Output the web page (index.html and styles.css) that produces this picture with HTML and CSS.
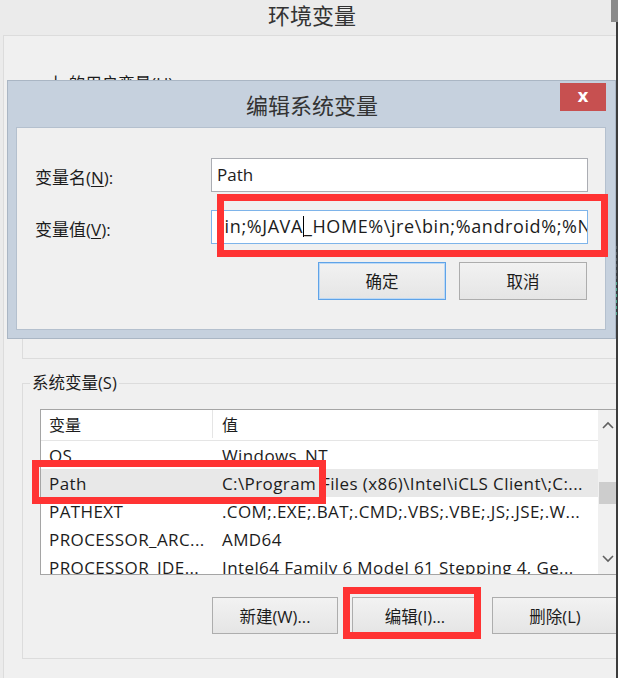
FILE: index.html
```html
<!DOCTYPE html>
<html lang="zh-CN">
<head>
  <meta charset="UTF-8" />
  <title>环境变量</title>
  <link rel="stylesheet" href="styles.css">
</head>
<body>
  <!-- Ventana de fondo: Variables de entorno -->
  <div class="env-window">
    <div class="env-title">环境变量</div>
    <div class="env-body">
      <div class="group-box user-box">
        <span class="group-label">上 的用户变量(U)</span>
      </div>
      <div class="group-box sys-box">
        <span class="group-label">系统变量(S)</span>
        <div class="listview">
          <div class="list-main">
            <div class="list-head">
              <span class="col-name">变量</span>
              <span class="col-val">值</span>
            </div>
            <div class="list-row"><span class="col-name">OS</span><span class="col-val">Windows_NT</span></div>
            <div class="list-row selected"><span class="col-name">Path</span><span class="col-val">C:\Program Files (x86)\Intel\iCLS Client\;C:...</span></div>
            <div class="list-row"><span class="col-name">PATHEXT</span><span class="col-val">.COM;.EXE;.BAT;.CMD;.VBS;.VBE;.JS;.JSE;.W...</span></div>
            <div class="list-row"><span class="col-name">PROCESSOR_ARC...</span><span class="col-val">AMD64</span></div>
            <div class="list-row"><span class="col-name">PROCESSOR_IDE...</span><span class="col-val">Intel64 Family 6 Model 61 Stepping 4, Ge...</span></div>
          </div>
          <div class="scrollbar">
            <span class="scroll-btn">
              <svg width="12" height="8" viewBox="0 0 12 8"><path d="M1 7 L6 2 L11 7" fill="none" stroke="#606060" stroke-width="1.6"/></svg>
            </span>
            <span class="scroll-track"><span class="scroll-thumb"></span></span>
            <span class="scroll-btn">
              <svg width="12" height="8" viewBox="0 0 12 8"><path d="M1 1 L6 6 L11 1" fill="none" stroke="#606060" stroke-width="1.6"/></svg>
            </span>
          </div>
        </div>
        <div class="btn-row">
          <button class="win-btn">新建(W)...</button>
          <button class="win-btn">编辑(I)...</button>
          <button class="win-btn">删除(L)</button>
        </div>
      </div>
    </div>
  </div>

  <!-- Borde de otra ventana a la derecha -->
  <div class="side-edge"></div>
  <div class="side-top"></div>
  <div class="side-meter">
    <span></span><span></span><span></span><span></span><span></span><span></span>
    <span class="on"></span><span class="on"></span><span class="on"></span><span class="on"></span><span class="on"></span><span class="on"></span>
  </div>

  <!-- Dialogo: Editar variable del sistema -->
  <div class="edit-dialog">
    <div class="dlg-titlebar">
      <span class="dlg-title">编辑系统变量</span>
      <span class="dlg-close">x</span>
    </div>
    <div class="dlg-panel">
      <div class="field-row">
        <span class="field-label">变量名(<u>N</u>):</span>
        <div class="field-input">Path</div>
      </div>
      <div class="field-row">
        <span class="field-label">变量值(<u>V</u>):</span>
        <div class="field-input focused">
          <div class="value-clip"><span class="scrolled">bin;%JAVA<span class="caret"></span>_HOME%\jre\bin;%android%;%NDK_HOME%</span></div>
        </div>
      </div>
      <div class="dlg-buttons">
        <button class="win-btn default">确定</button>
        <button class="win-btn">取消</button>
      </div>
    </div>
  </div>

  <!-- Marcas rojas de la captura -->
  <div class="mark mark-value"></div>
  <div class="mark mark-path"></div>
  <div class="mark mark-edit"></div>
</body>
</html>
```

FILE: styles.css
```css
* { box-sizing: border-box; margin: 0; padding: 0; }
body {
  font-family: "Open Sans", "Noto Sans CJK SC", sans-serif;
  font-size: 16px;
  color: #1c1c1c;
  background: #f0f0f0;
  width: 618px;
  height: 678px;
  overflow: hidden;
  position: relative;
}

/* Ventana de fondo */
.env-window {
  width: 618px;
  height: 678px;
  background: #ebebeb;
  overflow: hidden;
}
.env-title {
  height: 35px;
  line-height: 30px;
  font-size: 22px;
  color: #333;
  padding-left: 268px;
}
.env-body {
  margin-left: 3px;
  height: 643px;
  background: #f0f0f0;
  border-top: 1px solid #dcdcdc;
  border-left: 1px solid #dcdcdc;
  padding-left: 18px;
}
.group-box {
  border: 1px solid #dcdcdc;
  width: 620px;
}
.group-label {
  display: block;
  width: max-content;
  background: #f0f0f0;
  padding: 0 2px;
  line-height: 24px;
  font-size: 16.5px;
}
.user-box {
  margin-top: 48px;
  height: 275px;
}
.user-box .group-label { margin: -13px 0 0 23px; }
.sys-box {
  margin-top: 24px;
  height: 276px;
  padding-left: 17px;
}
.sys-box .group-label { margin: -13px 0 0 -10px; }

/* Lista de variables */
.listview {
  margin-top: 14px;
  width: 577px;
  height: 166px;
  border: 1px solid #a5a5a5;
  border-right: none;
  background: #fff;
  display: flex;
  overflow: hidden;
}
.list-main { flex: 1; min-width: 0; }
.list-head, .list-row {
  display: flex;
  height: 28px;
  align-items: center;
}
.list-row {
  font-size: 17px;
  letter-spacing: 0.4px;
}
.list-head {
  height: 31px;
  border-bottom: 1px solid #e5e5e5;
  padding-bottom: 2px;
}
.col-name {
  width: 172px;
  flex: none;
  padding-left: 8px;
  white-space: nowrap;
  overflow: hidden;
}
.col-val {
  flex: 1;
  padding-left: 9px;
  white-space: nowrap;
  overflow: hidden;
}
.list-head .col-name {
  height: 100%;
  display: flex;
  align-items: center;
  border-right: 1px solid #e5e5e5;
}
.list-row.selected { background: #e8e8e8; }
.scrollbar {
  width: 19px;
  flex: none;
  background: #f0f0f0;
  display: flex;
  flex-direction: column;
}
.scroll-btn {
  height: 30px;
  display: flex;
  align-items: center;
  justify-content: center;
}
.scroll-track {
  flex: 1;
  position: relative;
}
.scroll-thumb {
  position: absolute;
  left: 1px;
  right: 1px;
  top: 42px;
  height: 22px;
  background: #cdcdcd;
}

/* Botones estilo Windows */
.win-btn {
  font-family: inherit;
  font-size: 16.5px;
  color: #1c1c1c;
  width: 126px;
  height: 37px;
  border: 1px solid #adadad;
  background: linear-gradient(#f2f2f2, #e5e5e5);
}
.btn-row {
  margin: 22px 0 0 172px;
  display: flex;
  gap: 14px;
}

/* Borde de la otra ventana */
.side-edge {
  position: absolute;
  right: 0;
  top: 0;
  width: 2px;
  height: 678px;
  background: #3c3c3c;
}
.side-top {
  position: absolute;
  right: 0;
  top: 0;
  width: 7px;
  height: 22px;
  background: #8a8a8a;
}
.side-meter {
  position: absolute;
  left: 604px;
  top: 240px;
  width: 16px;
  height: 85px;
  border-radius: 4px;
  background: #3a3e42;
  padding: 6px 3px 0 4px;
  display: flex;
  flex-direction: column;
  gap: 3px;
}
.side-meter span {
  height: 3px;
  background: #5a5f63;
}
.side-meter span.on { background: #4fa88c; }

/* Dialogo */
.edit-dialog {
  position: absolute;
  left: 7px;
  top: 80px;
  width: 609px;
  height: 259px;
  background: #c6d1de;
  border: 1px solid #aab6c4;
  padding: 0 9px 8px 8px;
  display: flex;
  flex-direction: column;
}
.dlg-titlebar {
  height: 46px;
  position: relative;
  display: flex;
  justify-content: center;
  align-items: center;
}
.dlg-title {
  font-size: 22px;
  color: #333;
  margin-left: 2px;
}
.dlg-close {
  position: absolute;
  right: 0;
  top: 2px;
  width: 46px;
  height: 28px;
  background: #c75050;
  color: #fff;
  font-family: "DejaVu Sans", sans-serif;
  font-size: 17px;
  font-weight: bold;
  text-align: center;
  line-height: 26px;
}
.dlg-panel {
  flex: 1;
  background: #f0f0f0;
  border: 1px solid #b4c0ce;
  padding: 30px 17px 0 18px;
}
.field-row {
  display: flex;
  align-items: center;
  margin-bottom: 18px;
}
.field-label {
  width: 176px;
  padding-top: 2px;
  font-size: 17px;
}
.field-label u { text-underline-offset: 2px; }
.field-input {
  width: 377px;
  height: 34px;
  background: #fff;
  border: 1px solid #abadb3;
  padding-left: 5px;
  line-height: 31px;
  font-size: 17px;
  white-space: nowrap;
  overflow: hidden;
}
.field-input.focused {
  border-color: #7eb4ea;
  padding-left: 7px;
}
.value-clip {
  overflow: hidden;
  font-size: 18px;
  letter-spacing: 0.6px;
}
.scrolled {
  display: inline-block;
  margin-left: -6px;
}
.caret {
  display: inline-block;
  width: 1px;
  height: 21px;
  background: #000;
  vertical-align: -4px;
}
.dlg-buttons {
  display: flex;
  justify-content: flex-end;
  gap: 13px;
  margin-top: 7px;
  padding-right: 1px;
}
.dlg-buttons .win-btn {
  width: 128px;
  height: 38px;
}
.win-btn.default {
  border-color: #5fa3e8;
  box-shadow: inset 0 0 0 1px #bcd9f5;
}

/* Marcas rojas */
.mark {
  position: absolute;
  border: 7px solid #ff3333;
}
.mark-value { left: 217px; top: 194px; width: 391px; height: 63px; }
.mark-path { left: 32px; top: 460px; width: 294px; height: 44px; }
.mark-edit { left: 343px; top: 587px; width: 138px; height: 52px; }
```
